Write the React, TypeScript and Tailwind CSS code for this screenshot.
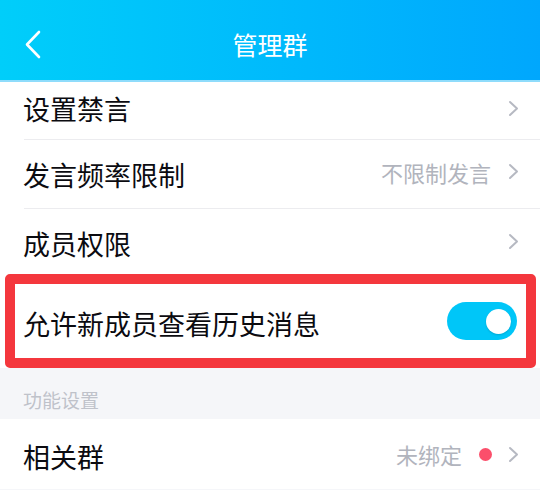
import { ReactNode } from 'react';

// Group management settings screen (QQ style)

const FONT = '"Noto Sans CJK SC", "Noto Sans", sans-serif';

function Chevron() {
  return (
    <svg width="11" height="17" viewBox="0 0 11 17" className="shrink-0">
      <path d="M2 2 L9 8.5 L2 15" fill="none" stroke="#b6b9c2" strokeWidth="2" strokeLinecap="round" strokeLinejoin="round" />
    </svg>
  );
}

function Row({ label, right, className, divider = true }: { label: string; right?: ReactNode; className?: string; divider?: boolean }) {
  return (
    <div className={`relative flex items-center pl-[23px] pr-[21px] bg-white ${className ?? ''}`}>
      <span className="flex-1 text-[27px] leading-none text-[#0b0b10]">{label}</span>
      {right}
      {divider && <div className="absolute left-[24px] right-0 bottom-0 h-px bg-[#ececef]" />}
    </div>
  );
}

export default function App() {
  return (
    <div className="w-[540px] h-[490px] overflow-hidden bg-[#f5f6f9]" style={{ fontFamily: FONT }}>
      {/* Header */}
      <div className="h-[82px] relative flex items-center justify-center bg-gradient-to-r from-[#00cefa] to-[#00a7fd] border-b-2 border-[#8fdcfb]">
        <svg width="18" height="30" viewBox="0 0 18 30" className="absolute left-[24px] top-[30px]">
          <path d="M15 2 L3 14.5 L15 27" fill="none" stroke="white" strokeWidth="2.6" strokeLinecap="round" strokeLinejoin="round" />
        </svg>
        <span className="text-white text-[25px] leading-none mt-[8px]">管理群</span>
      </div>

      <Row label="设置禁言" className="h-[58px] pb-[6px]" right={<Chevron />} />
      <Row
        label="发言频率限制"
        className="h-[69px]"
        right={
          <div className="flex items-center gap-[17px] mb-[6px]">
            <span className="text-[22px] leading-none text-[#b1b4bd]">不限制发言</span>
            <Chevron />
          </div>
        }
      />
      <Row label="成员权限" className="h-[69px]" right={<div className="mb-[4px]"><Chevron /></div>} divider={false} />

      {/* highlighted row */}
      <div className="relative">
        <Row
          label="允许新成员查看历史消息"
          className="h-[90px]"
          divider={false}
          right={
            <div className="w-[70px] h-[38px] rounded-full bg-[#00c6f8] flex items-center justify-end pr-[6px] mb-[4px] mr-[2px]">
              <div className="w-[25px] h-[25px] rounded-full bg-white shadow-[0_1px_2px_rgba(0,0,0,0.15)]" />
            </div>
          }
        />
        <div className="absolute left-[5px] top-[-4px] w-[531px] h-[94px] border-[10px] border-[#f4373d] rounded-[5px]" />
      </div>

      {/* Section header */}
      <div className="h-[51px] flex items-center pl-[23px] pt-[12px]">
        <span className="text-[19px] leading-none text-[#bfc2ca]">功能设置</span>
      </div>

      <Row
        label="相关群"
        className="h-[70px] pt-[4px]"
        divider={false}
        right={
          <div className="flex items-center mb-[4px]">
            <span className="text-[22px] leading-none text-[#b1b4bd]">未绑定</span>
            <span className="w-[13px] h-[13px] rounded-full bg-[#fb4f6b] ml-[17px] mr-[16px]" />
            <Chevron />
          </div>
        }
      />
    </div>
  );
}
